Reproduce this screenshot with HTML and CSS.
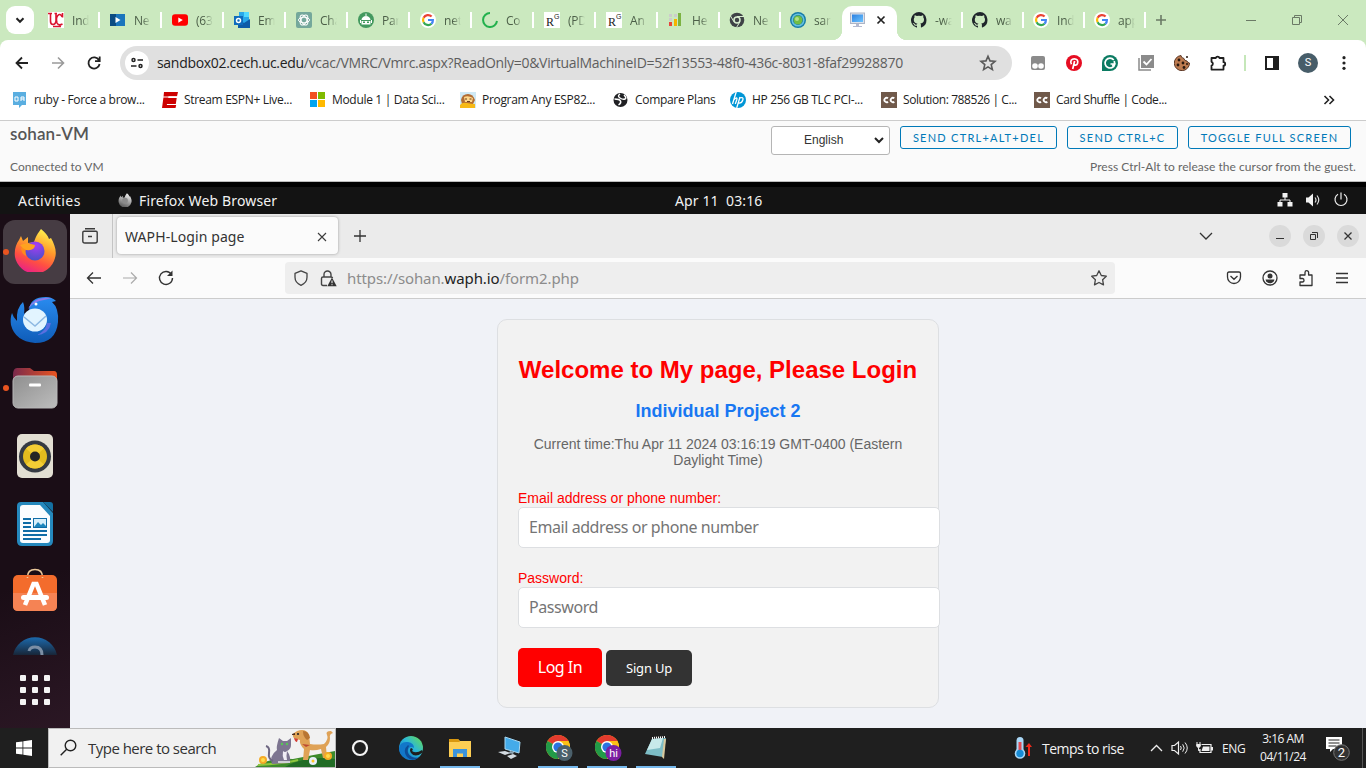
FILE: index.html
```
<!DOCTYPE html>
<html lang="en">
<head>
<meta charset="utf-8">
<title>sohan-VM</title>
<link rel="stylesheet" href="styles.css">
</head>
<body>
<svg class="defs" width="0" height="0">
  <defs>
    <linearGradient id="fire" x1=".7" y1="0" x2=".3" y2="1"><stop offset="0" stop-color="#fff44f"/><stop offset=".4" stop-color="#ff9a2b"/><stop offset=".7" stop-color="#ff4f42"/><stop offset="1" stop-color="#e81e8c"/></linearGradient>
    <linearGradient id="silver" x1=".7" y1="0" x2=".3" y2="1"><stop offset="0" stop-color="#f4f4f4"/><stop offset="1" stop-color="#555"/></linearGradient>
    <radialGradient id="violet" cx=".55" cy=".2" r=".8"><stop offset="0" stop-color="#a83cf5"/><stop offset="1" stop-color="#4a50c8"/></radialGradient>
    <linearGradient id="bird" x1="0" y1="0" x2="0" y2="1"><stop offset="0" stop-color="#2a8cf0"/><stop offset="1" stop-color="#0f5cb8"/></linearGradient>
    <linearGradient id="gray" x1="0" y1="0" x2="1" y2="1"><stop offset="0" stop-color="#8f8f8f"/><stop offset="1" stop-color="#bdbdbd"/></linearGradient>
    <linearGradient id="ubuntu" x1="0" y1="0" x2="1" y2="0"><stop offset="0" stop-color="#7a2a4c"/><stop offset="1" stop-color="#e95420"/></linearGradient>
    <linearGradient id="edge" x1="1" y1="0" x2="0" y2="1"><stop offset="0" stop-color="#6be04a"/><stop offset=".45" stop-color="#2bb8d8"/><stop offset="1" stop-color="#0a62c0"/></linearGradient>
    <linearGradient id="help" x1="0" y1="0" x2="0" y2="1"><stop offset="0" stop-color="#1c6aad"/><stop offset="1" stop-color="#182638"/></linearGradient>
    <linearGradient id="screen" x1="0" y1="0" x2="1" y2="1"><stop offset="0" stop-color="#2b7fe0"/><stop offset="1" stop-color="#6cc3ff"/></linearGradient>
  </defs>
  <symbol id="google" viewBox="0 0 16 16"><circle cx="8" cy="8" r="8" fill="#fff"/><g fill="none" stroke-width="2.2"><path d="M11.6 4.600A5 5 0 0 0 3.600 5.800" stroke="#ea4335"/><path d="M3.600 5.700a5 5 0 0 0 0 4.600" stroke="#fbbc05"/><path d="M3.600 10.200a5 5 0 0 0 7.900 1.500" stroke="#34a853"/><path d="M8 8h4.900a5 5 0 0 1-1.500 3.800" stroke="#4285f4"/></g></symbol>
  <symbol id="github" viewBox="0 0 16 16"><path fill="#20262c" d="M8 0a8 8 0 0 0-2.500 15.600c.4.1.5-.2.5-.4v-1.500c-2 .4-2.700-.5-2.900-1-.1-.2-.5-1-.9-1.200-.3-.1-.7-.5 0-.5s1.100.6 1.300.8c.7 1.200 1.900.9 2.400.7.100-.5.300-.9.500-1.100-1.800-.2-3.600-.9-3.600-4 0-.9.300-1.600.8-2.100-.1-.2-.4-1 .1-2.100 0 0 .7-.2 2.200.8a7.500 7.500 0 0 1 4 0c1.500-1 2.200-.8 2.200-.8.400 1.100.2 1.900.1 2.100.5.600.8 1.300.8 2.100 0 3.100-1.900 3.700-3.700 3.900.3.300.6.700.6 1.500v2.200c0 .2.100.5.500.4A8 8 0 0 0 8 0z"/></symbol>
  <symbol id="firefox" viewBox="0 0 44 44"><path d="M28 1c4 3 7 7 8 10l2-1c4 7 6 14 4 20a20.500 20.500 0 0 1-40-1C1 22 3 16 6 12l2-4 2 5 5-4 0 6 6-1c2-6 4-9 7-13z"/></symbol>
  <symbol id="chrome" viewBox="0 0 24 24"><circle cx="12" cy="12" r="12" fill="#fbc116"/><path d="M12 12 1.600 6A12 12 0 0 1 22.400 6z" fill="#e33b2e"/><path d="M12 12 1.600 6A12 12 0 0 0 12 24l5-9z" fill="#229a48"/><path d="M12 6h10.400A12 12 0 0 1 12 24l5-9z" fill="#fbc116"/><circle cx="12" cy="12" r="6" fill="#fff"/><circle cx="12" cy="12" r="4.600" fill="#2b73e0"/></symbol>
  <symbol id="cc" viewBox="0 0 16 16"><rect width="16" height="16" fill="#70594a"/><path d="M7 6.300a2.200 2.200 0 1 0 0 3.400M13.300 6.300a2.200 2.200 0 1 0 0 3.400" fill="none" stroke="#fff" stroke-width="1.800"/></symbol>
</svg>

<header class="chrome">
  <div class="tabstrip">
    <button class="tabsearch"><svg width="28" height="28" viewBox="0 0 28 28"><path d="M10.500 12.300 14 15.800l3.500-3.500" fill="none" stroke="#222" stroke-width="2"/></svg></button>
    <div class="tab"><svg class="fav" viewBox="0 0 16 16"><rect width="16" height="16" fill="#fff"/><g fill="none" stroke="#d9142f" stroke-width="1.600"><path d="M0 1.500h4M2.500 1.500V9q0 3.500 2.500 3.500T8 9V1.500M6.500 1.500H9M14 4.500Q12 1 9.800 3.500T9 11q1.500 3 5.500 1M5 14.500h8M14.500 1v4.500"/></g></svg><span>Ind</span></div>
    <div class="tab"><svg class="fav" viewBox="0 0 16 16"><path fill="#1a75bd" d="M0 2h15v12H0z"/><path fill="#0b4c83" d="M0 2h6v12H0z"/><path fill="#fff" d="m5.500 5 5 3-5 3z"/></svg><span>Ne</span></div>
    <div class="tab"><svg class="fav" viewBox="0 0 16 16"><rect y="2.300" width="16" height="11.500" rx="3" fill="#f00"/><path fill="#fff" d="m6.300 5.500 4.500 2.600-4.500 2.600z"/></svg><span>(63</span></div>
    <div class="tab"><svg class="fav" viewBox="0 0 16 16"><path fill="#28a8ea" d="M5 0h10v14H5z"/><path fill="#0d5ca8" d="m4 7 6 4 6-4v9H4z"/><path fill="#50d9ff" d="M10 0h5v5h-5z"/><rect y="4" width="9" height="9" fill="#0f6cbd"/><circle cx="4.500" cy="8.500" r="2" fill="none" stroke="#fff" stroke-width="1.500"/></svg><span>Em</span></div>
    <div class="tab"><svg class="fav" viewBox="0 0 16 16"><rect width="16" height="16" rx="2" fill="#74a89b"/><g fill="none" stroke="#fff"><ellipse cx="8" cy="8" rx="5.500" ry="2.800"/><ellipse cx="8" cy="8" rx="5.500" ry="2.800" transform="rotate(60 8 8)"/><ellipse cx="8" cy="8" rx="5.500" ry="2.800" transform="rotate(120 8 8)"/></g></svg><span>Cha</span></div>
    <div class="tab"><svg class="fav" viewBox="0 0 16 16"><circle cx="8" cy="8" r="8" fill="#43995f"/><path fill="#fff" d="M3.500 8a4.500 4 0 0 1 9 0zM3.500 9h9v3.500h-9zM7.500 1.500h1v3h-1zM2 8h1v3H2zM13 8h1v3h-1z"/><path fill="#43995f" d="M5 9.500h2v1.500H5zM9 9.500h2v1.500H9z"/></svg><span>Par</span></div>
    <div class="tab"><svg class="fav"><use href="#google"/></svg><span>net</span></div>
    <div class="tab"><svg class="fav" viewBox="0 0 16 16"><path d="M8 1a7 7 0 1 0 7 8" fill="none" stroke="#23b14d" stroke-width="2"/></svg><span>Co</span></div>
    <div class="tab"><svg class="fav" viewBox="0 0 16 16"><rect width="16" height="16" fill="#fff"/><text x="2" y="14" class="rg">R</text><text x="10" y="7" class="rg2">G</text></svg><span>(PD</span></div>
    <div class="tab"><svg class="fav" viewBox="0 0 16 16"><rect width="16" height="16" fill="#fff"/><text x="2" y="14" class="rg">R</text><text x="10" y="7" class="rg2">G</text></svg><span>An</span></div>
    <div class="tab narrow"><svg class="fav" viewBox="0 0 16 16"><path fill="#ccc" d="M1 2h3v3H1zM1 6h3v3H1zM6 2h3v3H6z"/><path fill="#e8453c" d="M1 10h3v4H1z"/><path fill="#f5b400" d="M6 7h3v7H6z"/><path fill="#7cb342" d="M10 1h3v13h-3z"/></svg><span>He</span></div>
    <div class="tab narrow"><svg class="fav" viewBox="0 0 16 16"><circle cx="8" cy="8" r="7.300" fill="#3e4246"/><circle cx="8" cy="8" r="3" fill="#3e4246" stroke="#d8eed0" stroke-width="1.500"/><path d="M8 4.500h7M5 9.800 1.500 4M10.800 10 7.500 15.500" stroke="#d8eed0"/></svg><span>Ne</span></div>
    <div class="tab narrow last"><svg class="fav" viewBox="0 0 16 16"><circle cx="8" cy="8" r="8" fill="#167ba9"/><circle cx="8" cy="8" r="5.800" fill="none" stroke="#67c2df" stroke-width="1.500"/><circle cx="8" cy="8" r="4.500" fill="#72bd45"/><circle cx="7" cy="7" r="2" fill="#b1e187"/></svg><span>san</span></div>
    <div class="tab narrow active"><svg class="fav" viewBox="0 0 16 16"><rect x=".5" y="1" width="14" height="10.500" fill="#dde2ec" stroke="#aeb5c6"/><rect x="2" y="2.500" width="11" height="7.500" fill="url(#screen)"/><path fill="#b5bad0" d="M6 12h3v2h3v1H3v-1h3z"/></svg><svg class="close" width="12" height="12" viewBox="0 0 12 12"><path d="m2.500 2.500 7 7m0-7-7 7" stroke="#222" stroke-width="1.700"/></svg></div>
    <div class="tab narrow"><svg class="fav"><use href="#github"/></svg><span>-wa</span></div>
    <div class="tab narrow"><svg class="fav"><use href="#github"/></svg><span>wa</span></div>
    <div class="tab narrow"><svg class="fav"><use href="#google"/></svg><span>Ind</span></div>
    <div class="tab narrow"><svg class="fav"><use href="#google"/></svg><span>app</span></div>
    <svg class="newtab" width="12" height="12" viewBox="0 0 12 12"><path d="M6 1v10M1 6h10" stroke="#6b7a66" stroke-width="1.600"/></svg>
    <div class="wincontrols">
      <svg viewBox="0 0 12 12"><path d="M1 6.500h10" stroke="#6b7a66"/></svg>
      <svg viewBox="0 0 12 12"><path d="M1.500 3.500h7v7h-7zM3.500 3V1.500h7v7H9" fill="none" stroke="#6b7a66"/></svg>
      <svg viewBox="0 0 12 12"><path d="m1 1 10 10m0-10L1 11" stroke="#6b7a66"/></svg>
    </div>
  </div>

  <div class="toolbar">
    <div class="cell"><svg width="16" height="16" viewBox="0 0 16 16"><path d="M14 8H3m5-5.500L2.500 8 8 13.500" fill="none" stroke="#222" stroke-width="1.800"/></svg></div>
    <div class="cell"><svg width="16" height="16" viewBox="0 0 16 16"><path d="M2 8h11M8 2.500 13.500 8 8 13.500" fill="none" stroke="#9a9a9a" stroke-width="1.600"/></svg></div>
    <div class="cell"><svg width="16" height="16" viewBox="0 0 16 16"><path d="M13 5.200A5.600 5.600 0 1 0 13.600 9M13.700 1.500v4.700H9" fill="none" stroke="#222" stroke-width="1.800"/></svg></div>
    <div class="omnibox">
      <span class="site"><svg width="14" height="14" viewBox="0 0 14 14"><g fill="none" stroke="#222" stroke-width="1.500"><circle cx="3.500" cy="4" r="1.500"/><circle cx="10.500" cy="10" r="1.500"/><path d="M7.500 4H13M1 10h5.500"/></g></svg></span>
      <span class="url"><b>sandbox02.cech.uc.edu</b>/vcac/VMRC/Vmrc.aspx?ReadOnly=0&amp;VirtualMachineID=52f13553-48f0-436c-8031-8faf29928870</span>
      <svg class="star" width="18" height="18" viewBox="0 0 18 18"><path d="m9 2.200 2 4.700 5 .4-3.800 3.300 1.200 5L9 12.900l-4.400 2.700 1.200-5L2 7.300l5-.4z" fill="none" stroke="#5a5a5a" stroke-width="1.600"/></svg>
    </div>
    <div class="cell"><svg width="16" height="16" viewBox="0 0 16 16"><rect x="1" y="1" width="14" height="14" rx="2" fill="#8b8b8b"/><circle cx="5" cy="11" r="2.800" fill="#fff"/><circle cx="11" cy="11" r="2.800" fill="#fff"/></svg></div>
    <div class="cell"><svg width="16" height="16" viewBox="0 0 16 16"><circle cx="8" cy="8" r="8" fill="#e60d22"/><path d="M5.500 9.300C3.500 6 5.800 3.800 8.300 3.800c2.700 0 4 2 3.300 4.400-.7 2.200-3 2.400-3.700 1M8.600 6 6.700 14" fill="none" stroke="#fff" stroke-width="1.700"/></svg></div>
    <div class="cell"><svg width="16" height="16" viewBox="0 0 16 16"><path d="M0 16V8a8 8 0 1 1 8 8z" fill="#0b7b62"/><path d="M11.800 5A4.900 4.900 0 1 0 12.800 9H8.500M12.200 6l.6 3-2.500 2" fill="none" stroke="#fff" stroke-width="1.700"/></svg></div>
    <div class="cell"><svg width="16" height="16" viewBox="0 0 16 16"><path d="M3 0h13v13H3z" fill="#8b8b8b"/><path d="M1 3v12h12" fill="none" stroke="#8b8b8b" stroke-width="1.500"/><path d="m5.500 6.500 3 3 5-5.500" fill="none" stroke="#fff" stroke-width="1.800"/></svg></div>
    <div class="cell"><svg width="16" height="16" viewBox="0 0 16 16"><path d="M7 .5A7.600 7.600 0 1 0 15.500 8q-2 0-2.500-2-3 0-3-2.500Q7 3 7 .5z" fill="#bd7b50" stroke="#5c3725"/><g fill="#291911"><circle cx="5" cy="5" r="1.400"/><circle cx="9" cy="8" r="1.400"/><circle cx="4" cy="10" r="1.400"/><circle cx="10" cy="12.500" r="1.400"/><circle cx="13" cy="9" r="1"/><circle cx="13" cy="2" r="1"/></g></svg></div>
    <div class="cell"><svg width="18" height="18" viewBox="0 0 18 18"><path d="M2.500 4h4.300a1.900 1.900 0 0 1 3.700 0h4v4.200a1.700 1.700 0 0 1 0 3.400v4h-12v-4a2 2 0 0 0 0-3.800z" fill="none" stroke="#1f1f1f" stroke-width="1.800" stroke-linejoin="round"/></svg></div>
    <div class="cell divider"><i></i></div>
    <div class="cell"><svg width="14" height="14" viewBox="0 0 14 14"><rect x="1" y="1" width="12" height="12" fill="none" stroke="#1f1f1f" stroke-width="2"/><path fill="#1f1f1f" d="M8 1h5v12H8z"/></svg></div>
    <div class="cell"><span class="avatar">S</span></div>
    <div class="cell"><svg width="4" height="16" viewBox="0 0 4 16"><g fill="#222"><circle cx="2" cy="2.700" r="1.600"/><circle cx="2" cy="8" r="1.600"/><circle cx="2" cy="13.300" r="1.600"/></g></svg></div>
  </div>

  <nav class="bookmarks">
    <a><svg class="fav" viewBox="0 0 16 16"><path d="M1 0h13v13h-4l-3 3v-3H1z" fill="#5aaee0"/><path d="M3 5h3v4H3zM9 9V5h3v4M9 7h3" fill="none" stroke="#fff"/></svg><span>ruby - Force a brow...</span></a>
    <a><svg class="fav" viewBox="0 0 16 16"><path d="M2 0h14l-1 4.300H6.500l-.3 1.700h8.500l-.9 6H5l-.2 1h9.400L13.500 16H0L1.500 5z" fill="#cd0000"/><path d="M1 5h14" stroke="#fff"/></svg><span>Stream ESPN+ Live...</span></a>
    <a><svg class="fav" viewBox="0 0 16 16"><path fill="#f25022" d="M0 0h7v7H0z"/><path fill="#7fba00" d="M8 0h7v7H8z"/><path fill="#00a4ef" d="M0 8h7v7H0z"/><path fill="#ffb900" d="M8 8h7v7H8z"/></svg><span>Module 1 | Data Sci...</span></a>
    <a><svg class="fav" viewBox="0 0 16 16"><path fill="#cfe9f5" d="M0 0h16v16H0z"/><path fill="#b26c33" d="M1 8q1-6 7-6 5 0 7 6l-2 4H2z"/><path fill="#f7b916" d="M0 13q2-3 7-2t8 1v4H0z"/><path fill="#ffd78a" d="M4 5q4-2 9 1l-1 4H5z"/><path d="M5 7h2M9.500 7h2M7 9.500h3" stroke="#6b3f1c"/></svg><span>Program Any ESP82...</span></a>
    <a><svg class="fav" viewBox="0 0 16 16"><circle cx="7.500" cy="8" r="7" fill="#202124"/><path d="M7 2Q4 4 7 6t5 1-1-4M1.500 7q5 0 6 2t-2 4" fill="none" stroke="#fff" stroke-width="1.500"/></svg><span>Compare Plans</span></a>
    <a><svg class="fav" viewBox="0 0 16 16"><circle cx="8" cy="8" r="8" fill="#0096d6"/><path d="M6.200 0 2.500 12M4.200 7.500Q7.800 4 6.700 8L5.300 12M10 5 6.700 16M9.800 6q4-1.500 3 2t-4.500 3" fill="none" stroke="#fff" stroke-width="1.300"/></svg><span>HP 256 GB TLC PCI-...</span></a>
    <a><svg class="fav"><use href="#cc"/></svg><span class="tight">Solution: 788526 | C...</span></a>
    <a><svg class="fav"><use href="#cc"/></svg><span class="tight">Card Shuffle | Code...</span></a>
    <svg class="more" width="12" height="12" viewBox="0 0 12 12"><path d="m1.500 2 4 4-4 4M6.500 2l4 4-4 4" fill="none" stroke="#222" stroke-width="1.600"/></svg>
  </nav>
</header>

<section class="vmbar">
  <div class="vminfo"><h1>sohan-VM</h1><p>Connected to VM</p></div>
  <div class="vmactions">
    <div class="vmbuttons">
      <div class="select">English<svg width="10" height="7" viewBox="0 0 10 7"><path d="m1 1 4 4 4-4" fill="none" stroke="#222" stroke-width="2"/></svg></div>
      <button class="b1">SEND CTRL+ALT+DEL</button><button class="b2">SEND CTRL+C</button><button class="b3">TOGGLE FULL SCREEN</button>
    </div>
    <p>Press Ctrl-Alt to release the cursor from the guest.</p>
  </div>
</section>

<div class="gnome">
  <span class="activities">Activities</span>
  <svg class="gfox" width="14" height="14" viewBox="0 0 44 44"><use href="#firefox" width="44" height="44" fill="url(#silver)"/><circle cx="22" cy="24" r="9" fill="#8b8b8b"/></svg>
  <span class="appname">Firefox Web Browser</span>
  <span class="clock">Apr 11&nbsp; 03:16</span>
  <div class="tray">
    <svg viewBox="0 0 16 16"><path fill="#f2f2f2" d="M5.500 1h5v4.500h-5zM.5 10h5v4.500h-5zM10.500 10h5v4.500h-5z"/><path d="M8 5v3M3 10.500V8h10v2.500" fill="none" stroke="#f2f2f2"/></svg>
    <svg viewBox="0 0 16 16"><path fill="#f2f2f2" d="M1 5.500h2.500L8 1.500v13l-4.500-4H1z"/><path d="M10 5.500q2 2.500 0 5M12 3.500q3.500 4.500 0 9" fill="none" stroke="#ddd" stroke-width="1.200"/></svg>
    <svg viewBox="0 0 16 16"><path d="M5 2.300a6 6 0 1 0 6 0M8 .5v7" fill="none" stroke="#f2f2f2" stroke-width="1.200"/></svg>
  </div>
</div>

<main class="desktop">
  <aside class="dock">
    <div class="app selected running"><svg width="44" height="46" viewBox="0 0 44 46"><use href="#firefox" width="44" height="44" fill="url(#fire)"/><path d="M8 20q6-5 14-2l-3 5q-5 0-6 5-5-3-5-8" fill="#ff8a1c"/><circle cx="22" cy="23" r="9.500" fill="url(#violet)"/><path d="M7 17q7-3 15 0 0 6-9 5-3-1-6-5" fill="#ffa21f"/></svg></div>
    <div class="app"><svg width="50" height="50" viewBox="0 0 50 50"><path d="M2 18q1 4 5 8Q6 13 13 7q2 5 1 12l5-4Q20 2 36 2q6 0 10 4l-4 1q7 6 6 20-2 21-23 21Q5 46 1 30q-1-7 1-12z" fill="url(#bird)"/><path d="M18 14Q24 1 42 3l-8 2q-10 1-16 9" fill="#8d7bea"/><ellipse cx="25" cy="25" rx="12" ry="11.500" fill="#e2f4ff"/><path d="m14 22 11 9 11-10" fill="none" stroke="#8db8e2" stroke-width="1.500"/><path d="M37 28q-1 8-10 12 12-1 14-12" fill="#5b6fe0"/><circle cx="26" cy="9" r="1.500" fill="#fff"/></svg></div>
    <div class="app running"><svg width="46" height="42" viewBox="0 0 46 42"><path d="M1 8q0-7 4-7h13l4 3h20q3 0 3 4v14H1z" fill="url(#ubuntu)"/><rect x="1" y="9" width="44" height="32" rx="5" fill="url(#gray)" stroke="#b8b8b8"/><rect x="17" y="16.500" width="12" height="3" rx="1" fill="#fff"/></svg></div>
    <div class="app"><svg width="38" height="46" viewBox="0 0 38 46"><rect x="1" y="1" width="36" height="44" rx="5" fill="#e2ded2"/><circle cx="19" cy="23.500" r="16" fill="#353a42"/><circle cx="19" cy="23.500" r="12" fill="#e3bb1e"/><path d="m19 23.500-9-8a12 12 0 0 1 18 0zM19 23.500l-9 8a12 12 0 0 0 18 0z" fill="#f3cd35"/><circle cx="19" cy="23.500" r="5" fill="#252525"/></svg></div>
    <div class="app"><svg width="38" height="46" viewBox="0 0 38 46"><path d="M5 1h22l10 11v28q0 5-5 5H6q-5 0-5-5V5q0-4 4-4" fill="#2588bd"/><path d="M7 4h17l10 11v24q0 3-3 3H7q-3 0-3-3V7q0-3 3-3" fill="#fafcff"/><path d="M27 1h7q3 0 3 3v7z" fill="#1470a2"/><g stroke="#0f6ca7" stroke-width="2"><path d="M7 18h8M7 22h8M7 26h8M7 30h24M7 34h24M7 38h18"/></g><rect x="17.500" y="17.500" width="13" height="9" fill="#d8effb" stroke="#0f6ca7"/><path fill="#1f86bd" d="m18 26 4-5 3 3 2-2 4 4z"/></svg></div>
    <div class="app store"><svg width="46" height="44" viewBox="0 0 46 44"><path d="M15.500 9q0-7.500 7.500-7.500T30.500 9" fill="none" stroke="#ecc99b" stroke-width="1.600"/><rect x="1" y="7" width="44" height="36" rx="5" fill="#f36c2c"/><path d="M1 25h44v13q0 5-5 5H6q-5 0-5-5z" fill="#f58354"/><path d="m13 37 8.500-21h3L33 37" fill="none" stroke="#fff" stroke-width="4.500"/><rect x="9" y="27" width="28" height="5" rx="2.500" fill="#fff"/><path d="M15.500 10V9M30.500 10V9" stroke="#ecc99b" stroke-width="1.600"/></svg></div>
    <div class="app clipped"><svg width="46" height="18" viewBox="0 0 46 18"><path d="M1 18a22.500 22.500 0 0 1 44 0z" fill="url(#help)"/><path d="M17 14q1-4 6-4 7 0 7 8" fill="none" stroke="#7c8fa5" stroke-width="3"/></svg></div>
    <div class="grid"><i></i><i></i><i></i><i></i><i></i><i></i><i></i><i></i><i></i></div>
  </aside>

  <div class="fxwindow">
    <div class="fxtabs">
      <div class="fxview"><svg width="16" height="16" viewBox="0 0 16 16"><path d="M3 .7h10M2 3.300h12q1.200 0 1.200 1.200V13q0 2-2 2H2.800q-2 0-2-2V4.500Q.8 3.300 2 3.300zM6 8.500h4" fill="none" stroke="#3c3c3c" stroke-width="1.400"/></svg></div>
      <div class="fxtab"><span>WAPH-Login page</span><svg width="10" height="10" viewBox="0 0 10 10"><path d="m1 1 8 8m0-8L1 9" stroke="#3c3c3c" stroke-width="1.100"/></svg></div>
      <svg class="fxplus" width="12" height="12" viewBox="0 0 12 12"><path d="M6 0v12M0 6h12" stroke="#333" stroke-width="1.300"/></svg>
      <svg class="fxdown" width="14" height="14" viewBox="0 0 14 14"><path d="m1 4 6 6 6-6" fill="none" stroke="#333" stroke-width="1.300"/></svg>
      <div class="fxwin">
        <svg viewBox="0 0 22 22"><path d="M7 13.500h8" stroke="#333"/></svg>
        <svg viewBox="0 0 22 22"><path d="M7.500 9.500h5v5h-5zM9 7.500h5.500V13" fill="none" stroke="#333"/></svg>
        <svg viewBox="0 0 22 22"><path d="m7.500 7.500 7 7m0-7-7 7" stroke="#333" stroke-width="1.300"/></svg>
      </div>
    </div>
    <div class="fxbar">
      <div class="cell"><svg width="16" height="16" viewBox="0 0 16 16"><path d="M15 8H1.500M7 2.500 1.500 8 7 13.500" fill="none" stroke="#333" stroke-width="1.300"/></svg></div>
      <div class="cell"><svg width="16" height="16" viewBox="0 0 16 16"><path d="M1 8h13.500M9 2.500 14.500 8 9 13.500" fill="none" stroke="#aaa" stroke-width="1.200"/></svg></div>
      <div class="cell"><svg width="16" height="16" viewBox="0 0 16 16"><path d="M13.500 4.500A6.500 6.500 0 1 0 14.500 8" fill="none" stroke="#333" stroke-width="1.400"/><path d="M14.500.5V6H9z" fill="#333"/></svg></div>
      <div class="fxurl">
        <svg class="shield" width="16" height="16" viewBox="0 0 16 16"><path d="m8 .8 6 2.500v4q0 5.500-6 8-6-2.500-6-8v-4z" fill="none" stroke="#444" stroke-width="1.300" stroke-linejoin="round"/></svg>
        <svg width="17" height="17" viewBox="0 0 17 17"><path d="M4 7V4.500a3.500 3.500 0 0 1 7 0V7M7 15.500H3q-1.500 0-1.500-1.500V8.500Q1.500 7 3 7h8q1.500 0 1.500 1" fill="none" stroke="#444" stroke-width="1.400"/><path fill="#333" d="m12 7.500 4.700 8.700H7.300z"/><path d="M12 10.500v2.700m0 1v1" stroke="#fff"/></svg>
        <span>https://sohan.<b>waph.io</b>/form2.php</span>
        <svg class="fxstar" width="18" height="18" viewBox="0 0 18 18"><path d="m9 1.800 2.300 4.700 5 .7-3.700 3.500.9 5.200L9 13.500l-4.500 2.400.9-5.200L1.700 7.200l5-.7z" fill="none" stroke="#444" stroke-width="1.300" stroke-linejoin="round"/></svg>
      </div>
      <div class="fxtools">
        <div class="cell"><svg width="16" height="16" viewBox="0 0 16 16"><path d="M1.500 3.500q0-1.500 1.500-1.500h10q1.500 0 1.500 1.500V7A6.500 6.500 0 0 1 1.500 7zM4.500 6 8 9.300 11.500 6" fill="none" stroke="#333" stroke-width="1.300"/></svg></div>
        <div class="cell"><svg width="16" height="16" viewBox="0 0 16 16"><circle cx="8" cy="8" r="7" fill="none" stroke="#333" stroke-width="1.300"/><circle cx="8" cy="6" r="2.500" fill="#333"/><path d="M3.500 9.500h9q-1 3.800-4.500 3.800t-4.500-3.800" fill="#333"/></svg></div>
        <div class="cell"><svg width="16" height="18" viewBox="0 0 16 18"><path d="M2 16.500V13h2.500Q6 13 6 11.300T4.500 9.500H2V6h5V3.500a1.800 1.800 0 0 1 3.600 0V6H14v10.500z" fill="none" stroke="#333" stroke-width="1.300" stroke-linejoin="round"/></svg></div>
        <div class="cell"><svg width="14" height="14" viewBox="0 0 14 14"><path d="M1 2.500h12M1 7h12M1 11.500h12" stroke="#333" stroke-width="1.300"/></svg></div>
      </div>
    </div>
    <div class="page">
      <form class="card">
        <h1>Welcome to My page, Please Login</h1>
        <h2>Individual Project 2</h2>
        <p>Current time:Thu Apr 11 2024 03:16:19 GMT-0400 (Eastern Daylight Time)</p>
        <label>Email address or phone number:</label>
        <input type="text" class="email" placeholder="Email address or phone number">
        <label>Password:</label>
        <input type="password" placeholder="Password">
        <div class="actions"><button type="button" class="login">Log In</button><button type="button" class="signup">Sign Up</button></div>
      </form>
    </div>
  </div>
</main>

<footer class="taskbar">
  <div class="start"><svg width="16" height="16" viewBox="0 0 16 16"><path fill="#fff" d="M0 2.300 6.500 1.400v6.200H0zM7.300 1.300 16 0v7.600H7.300zM0 8.400h6.500v6.200L0 13.700zM7.300 8.400H16V16l-8.700-1.200z"/></svg></div>
  <div class="search">
    <svg width="18" height="18" viewBox="0 0 18 18"><circle cx="10.500" cy="6.500" r="5.300" fill="none" stroke="#222" stroke-width="1.400"/><path d="m6.700 10.300-6 6" stroke="#222" stroke-width="1.400"/></svg>
    <span>Type here to search</span>
    <svg class="pets" width="80" height="38" viewBox="0 0 80 38">
      <path d="M0 38Q14 28 38 30q20-4 42-8v16z" fill="#3c8a2c"/><path d="M30 38q20-12 50-8v8z" fill="#216c25"/><path d="M3 36q30-2 40-5" stroke="#8fc63d" stroke-width="2" fill="none"/>
      <g fill="#7d7590"><path d="m24 9 4 3h4l4-3v7q0 4-4 6 4 5 3 12l-18 1q-3-8 5-14-1-3 2-12"/><path d="M18 32q-5-2-4-8t-3-7" fill="none" stroke="#6e6782" stroke-width="2"/></g><path d="M28 22q2 2 4 0-1 5 0 9h-3q-2-4-1-9" fill="#f1edf5"/><circle cx="27" cy="15" r="1.200" fill="#55c755"/><circle cx="32" cy="15" r="1.200" fill="#55c755"/><path d="M23 33h12" stroke="#eee" stroke-width="1.500"/>
      <path d="M38 5q4-4 9-4t7 5l1 9q7 1 14 0 5-5 3-9t4-4l2 2q-4 1-3 5 0 6-4 9l1 11h-4l-2-9q-6 2-11 1l-2 10h-5l1-11q-5-5-4-9l-4-1q-4-1-3-5" fill="#dfa256"/><path d="M48 2q6 0 7 7l-3 2q-4-3-4-9" fill="#b87532"/><path d="m37 5 3-1v2h-3z" fill="#503021"/><circle cx="43" cy="5" r="1.100" fill="#222"/><path d="m39 9 4 1-1 3q-2 0-3-4" fill="#d43e35"/><path d="m47 15 8 1-4 2z" fill="#bc4932"/>
      <g fill="#f5ab25"><circle cx="8" cy="31" r="4"/><circle cx="73" cy="27" r="4"/></g><g fill="#ffdc4b"><circle cx="8" cy="31" r="2"/><circle cx="73" cy="27" r="2"/></g><circle cx="58" cy="32" r="4" fill="#e6effa"/><circle cx="58" cy="32" r="1.500" fill="#ffc723"/>
    </svg>
  </div>
  <div class="task cortana"><svg width="18" height="18" viewBox="0 0 18 18"><circle cx="9" cy="9" r="7" fill="none" stroke="#f4f4f4" stroke-width="2.200"/></svg></div>
  <div class="task"><svg width="24" height="24" viewBox="0 0 24 24"><circle cx="12" cy="12" r="12" fill="url(#edge)"/><path d="M0 13Q1 5 9 6q6 1 6 6-3-2-5 0-3 4 2 8 5 3 9 0-7 7-15 2Q1 19 0 13" fill="#1277c9"/><path d="M9 9q-6 5-1 12 5 5 11 1-8 0-10-5-1-4 1-7" fill="#0d4d98"/><path d="M12 12q-2 2 0 5 4 5 11 0l1-1-1-2q-6 4-10 1 2-2-1-3" fill="#1f1f1f"/></svg></div>
  <div class="task open multi"><svg width="24" height="22" viewBox="0 0 24 22"><path d="M1 2h9l2 2h11v16H1z" fill="#fdce54"/><path d="M1 2h9l2 3H1z" fill="#d9980f"/><path d="M5 20v-8h14v8h-4v-3.500H9V20z" fill="#3b94dc"/></svg></div>
  <div class="task"><svg width="24" height="24" viewBox="0 0 24 24"><path d="m8 1 15 5-1 11-14-4z" fill="#44abe9" stroke="#a8d8f2"/><path d="m1 16 7-1 6 2-6 2zM10 20l6-2 4 2-6 3z" fill="#d4dce2"/><path d="m13 15 4 1-1 2-4-1z" fill="#8fa6b5"/></svg></div>
  <div class="task open"><svg class="profile" width="27" height="26" viewBox="0 0 27 26"><use href="#chrome" width="24" height="24"/><circle cx="18.500" cy="18" r="8" fill="#4b606b"/><text x="18.500" y="22" class="badge">S</text></svg></div>
  <div class="task open"><svg class="profile" width="27" height="26" viewBox="0 0 27 26"><use href="#chrome" width="24" height="24"/><circle cx="18.500" cy="18" r="8" fill="#7b1fa2"/><text x="18.500" y="22" class="badge">hi</text></svg></div>
  <div class="task open"><svg width="24" height="24" viewBox="0 0 24 24"><path d="m8 3 14-1-3 19L1 18z" fill="#7dbdc6"/><path d="m8 3 11-1-3 10-13 2z" fill="#c7e9ea"/><path d="m22 3-2 20-2-2 2-18z" fill="#d9c99d"/><path d="m8 2 13-1" stroke="#fff" stroke-width="2" stroke-dasharray="1 1"/></svg></div>
  <div class="systray">
    <svg class="weather" width="20" height="24" viewBox="0 0 20 24"><rect x="4.500" y="1" width="7" height="17" rx="3.500" fill="#a9d7f6"/><circle cx="8" cy="17.500" r="5.300" fill="#a9d7f6"/><path d="M8 6v8" stroke="#e44b52" stroke-width="3"/><circle cx="8" cy="17.500" r="3.700" fill="#178bd5"/><path d="m13.500 11 3.500-4 3 4h-2v9h-2v-9z" fill="#ef2a1c"/></svg>
    <span class="temps">Temps to rise</span>
    <svg class="up" width="13" height="8" viewBox="0 0 13 8"><path d="m1 7 5.500-5.500L12 7" fill="none" stroke="#eee" stroke-width="1.300"/></svg>
    <svg class="sound" width="18" height="16" viewBox="0 0 18 16"><path d="M1 5.500h2.500l4-3.500v12l-4-3.500H1z" fill="none" stroke="#eee" stroke-width="1.200"/><path d="M9.500 6q1.500 2 0 4M11.700 4.300q3 3.700 0 7.400M14 2.500q4.500 5.500 0 11" fill="none" stroke="#eee"/></svg>
    <svg class="battery" width="17" height="14" viewBox="0 0 17 14"><path d="M5.500 3.500H15v8H4V8" fill="none" stroke="#eee" stroke-width="1.200"/><path d="M7 5.500h6.500V10h-8zM15 6h2v3.500h-2z" fill="#eee"/><path d="M1 1v2M4 1v2M.5 3.500h4q0 3-2 3t-2-3M2.500 6.500v3h1.500" fill="#eee" stroke="#eee"/></svg>
    <span class="eng">ENG</span>
    <div class="time"><span>3:16 AM</span><span>04/11/24</span></div>
    <svg class="notify" width="26" height="28" viewBox="0 0 26 28"><path d="M1 3h16v12H8l-3 3v-3H1z" fill="#fff"/><path d="M3.500 6h11M3.500 9h11M3.500 12h8" stroke="#222"/><circle cx="16.500" cy="18.500" r="7.800" fill="#333" stroke="#777"/><text x="16.500" y="23" class="badge count">2</text></svg>
  </div>
</footer>
</body>
</html>
```
FILE: styles.css
```
* { box-sizing: border-box; margin: 0; padding: 0; }
body { width: 1366px; height: 768px; overflow: hidden; display: flex; flex-direction: column; background: #fff; font-family: "Open Sans", "Noto Sans", sans-serif; font-size: 12px; color: #222; }
button { font: inherit; border: 0; background: none; }
svg { flex: none; display: block; }
span { white-space: nowrap; }
.defs { position: absolute; }
.fav { width: 16px; height: 16px; }
.cell { width: 36px; flex: none; display: flex; align-items: center; justify-content: center; }

/* Browser chrome */
.chrome { height: 120px; flex: none; background: #cbe9bf; }
.tabstrip { height: 40px; display: flex; align-items: center; padding-left: 6px; }
.tabsearch { width: 28px; height: 28px; border-radius: 9px; background: #fff; margin-right: 14px; flex: none; }
.tab { width: 62px; flex: none; height: 36px; display: flex; align-items: center; position: relative; }
.tab.narrow { width: 61px; }
.tab span { margin-left: 8px; width: 17px; overflow: hidden; color: #4c5f48; letter-spacing: -.2px; mask-image: linear-gradient(90deg, #000 50%, transparent); }
.tab::after { content: ""; position: absolute; left: 50px; top: 10px; width: 2px; height: 16px; background: #fff; }
.tab.last { width: 60px; }
.tab.last::after { display: none; }
.tab.active { z-index: 1; }
.tab.active::before { content: ""; position: absolute; z-index: -1; left: -8px; top: 4px; width: 55px; height: 34px; background: #fff; border-radius: 10px 10px 0 0; }
.tab.active::after { z-index: -1; left: -18px; top: 28px; width: 75px; height: 10px; background: radial-gradient(circle at 0 0, transparent 10px, #fff 10.5px) left / 10px 10px no-repeat, radial-gradient(circle at 100% 0, transparent 10px, #fff 10.5px) right / 10px 10px no-repeat; }
.tab .close { margin-left: 9px; }
.newtab { margin-left: 0; }
.wincontrols { margin-left: auto; display: flex; gap: 34px; padding-right: 17px; }
.wincontrols svg { width: 12px; height: 12px; }
.rg { font: 12px "Liberation Serif", serif; fill: #222; }
.rg2 { font: 7px "Liberation Sans", sans-serif; fill: #222; }
.toolbar { height: 46px; background: #fff; border-radius: 8px 8px 0 0; display: flex; padding-left: 4px; }
.omnibox { margin: 6px 8px; width: 892px; height: 34px; border-radius: 17px; background: #e0e0e0; display: flex; align-items: center; padding: 0 15px 0 5px; }
.site { width: 24px; height: 24px; border-radius: 50%; background: #fff; display: grid; place-items: center; }
.url { margin-left: 8px; font-size: 14px; color: #5e5e5e; letter-spacing: -.3px; margin-top: -1px; }
.url b { font-weight: 400; color: #222; }
.star { margin-left: auto; }
.divider { width: 18px; }
.divider i { width: 2px; height: 16px; background: #c5e7b9; }
.avatar { width: 20px; height: 20px; border-radius: 50%; background: #475d69; color: #fff; font: 11px/20px Roboto, sans-serif; text-align: center; }
.bookmarks { height: 34px; background: #fff; display: grid; grid-template-columns: 150px 148px 150px 153px 117px 151px 153px 289px 12px; align-items: center; padding: 0 0 7px 12px; }
.bookmarks a { display: flex; align-items: center; gap: 6px; }
.bookmarks span { letter-spacing: -.32px; }
.bookmarks .tight { letter-spacing: -.42px; }

/* Remote console header */
.vmbar { height: 62px; flex: none; background: #fafafa; border-top: 1px solid #ccc; border-bottom: 1px solid #bbb; display: flex; justify-content: space-between; padding: 5px 10px 0; font-family: Lato, sans-serif; color: #565656; }
.vminfo h1 { font-size: 17px; font-weight: 600; line-height: 15px; letter-spacing: .1px; }
.vminfo p { font-size: 12px; line-height: 14px; margin-top: 19px; color: #666; }
.vmactions > p { font-size: 12px; line-height: 14px; margin-top: 5px; text-align: right; color: #666; letter-spacing: .04px; }
.vmbuttons { display: flex; gap: 10px; padding-right: 5px; align-items: flex-start; }
.vmbuttons button { height: 23px; border: 1px solid #0079b8; border-radius: 3px; color: #0079b8; font-size: 11px; line-height: 21px; letter-spacing: 1.25px; }
.b1 { width: 157px; } .b2 { width: 111px; } .b3 { width: 163px; }
.select { width: 119px; height: 29px; border: 1px solid #b5b5b5; border-radius: 3px; background: #fff; color: #333; font: 12px/27px "Liberation Sans", sans-serif; padding: 0 5px 0 32px; display: flex; align-items: center; justify-content: space-between; }

/* Guest desktop */
.gnome { height: 32px; flex: none; border-top: 5px solid #000; background: #131313; color: #f2f2f2; font: 14px "Noto Sans", sans-serif; display: flex; align-items: center; padding: 0 0 1px 18px; }
.activities { width: 100px; letter-spacing: .45px; }
.appname { width: 536px; margin-left: 7px; letter-spacing: .15px; }
.clock { letter-spacing: .1px; }
.tray { display: flex; gap: 12px; margin-left: auto; padding-right: 17px; }
.tray svg { width: 16px; height: 16px; }
.desktop { height: 514px; flex: none; display: flex; }
.dock { width: 70px; flex: none; background: linear-gradient(160deg, #1a0d16 70%, #2b1724); padding: 4px 3px 0; }
.app { width: 64px; height: 64px; margin: 2px 0 4px; display: grid; place-items: center; position: relative; border-radius: 12px; }
.app.selected { background: #463c43; padding-bottom: 2px; }
.app.running::before { content: ""; position: absolute; left: 0; top: 29px; width: 6px; height: 6px; border-radius: 50%; background: #e95420; }
.app.store { padding-bottom: 5px; }
.app.clipped { height: 18px; margin-top: 13px; margin-bottom: 0; }
.grid { display: grid; grid-template-columns: repeat(3, 6px); gap: 6px; margin: 20px 0 0 17px; }
.grid i { width: 6px; height: 6px; border-radius: 1px; background: #f4f4f4; }
.fxwindow { flex: 1; display: flex; flex-direction: column; font-family: "Noto Sans", sans-serif; }
.fxtabs { height: 44px; background: #ebebeb; display: flex; align-items: center; }
.fxview { width: 43px; height: 44px; border-right: 1px solid #c4c4c4; display: grid; place-items: center; padding-right: 2px; }
.fxtab { width: 221px; height: 37px; margin: -1px 16px 0 4px; border-radius: 4px; background: #fbfbfb; box-shadow: 0 0 3px #999; display: flex; align-items: center; justify-content: space-between; padding: 2px 11px 0 8px; font-size: 14px; letter-spacing: .1px; color: #333; }
.fxdown { margin-left: 833px; }
.fxwin { display: flex; gap: 12px; margin-left: auto; padding-right: 7px; }
.fxwin svg { width: 22px; height: 22px; border-radius: 50%; background: #dadada; }
.fxbar { height: 41px; background: #fbfbfb; border-bottom: 1px solid #ccc; display: flex; padding-left: 6px; }
.fxurl { width: 830px; height: 32px; margin: 4px 0 0 101px; background: #eee; border-radius: 4px; display: flex; align-items: center; padding: 0 7px 0 8px; color: #8c8c8c; font-size: 15px; }
.fxurl .shield { margin-right: 11px; }
.fxurl span { margin-left: 10px; letter-spacing: -.1px; }
.fxurl b { font-weight: 400; color: #222; }
.fxstar { margin-left: auto; }
.fxtools { display: flex; margin-left: auto; padding-right: 6px; }
.page { flex: 1; background: #f0f2f7; display: flex; justify-content: center; align-items: flex-start; padding-top: 20px; }
.card { width: 442px; height: 389px; background: #f2f2f2; border: 1px solid #dddfe2; border-radius: 10px; padding: 36px 20px 0; font: 14px "Liberation Sans", Arial, sans-serif; }
.card h1 { font-size: 24px; line-height: 28px; color: #f00; text-align: center; white-space: nowrap; }
.card h2 { font-size: 18px; line-height: 20px; color: #1877f2; text-align: center; margin-top: 17px; }
.card p { line-height: 16px; text-align: center; color: #666; margin: 15px 0 22px; }
.card label { display: block; line-height: 16px; color: #f00; margin-bottom: 1px; }
.card input { display: block; width: 422px; height: 41px; border: 1px solid #dddfe2; border-radius: 5px; padding: 9px 10px 11px; background: #fff; font: 16px "Noto Sans", sans-serif; letter-spacing: -.43px; margin-bottom: 22px; }
.card input::placeholder { color: #757575; }
.actions { display: flex; align-items: center; gap: 4px; margin-top: -2px; }
.login, .signup { border-radius: 5px; color: #fff; font-family: "Noto Sans", sans-serif; }
.login { width: 84px; height: 39px; background: #f00; font-size: 16px; letter-spacing: -.5px; padding-bottom: 2px; }
.signup { width: 86px; height: 36px; background: #333; font-size: 13px; letter-spacing: -.2px; margin-top: 1px; }

/* Host taskbar */
.taskbar { height: 40px; flex: none; background: #1f1f1f; display: flex; color: #f2f2f2; }
.start { width: 48px; display: grid; place-items: center; }
.search { width: 288px; background: #f1f1f1; border: 1px solid #bbb; display: flex; align-items: center; padding-left: 11px; color: #333; font-size: 15px; }
.search span { margin-left: 10px; letter-spacing: -.52px; }
.pets { margin-left: auto; }
.task { width: 40px; margin-right: 9px; display: grid; place-items: center; border-bottom: 2px solid transparent; padding-top: 2px; }
.task.cortana { width: 48px; margin-right: 7px; }
.task.open { border-color: #76b9ed; }
.profile { margin-left: 2px; }
.badge { font: 11px Roboto, sans-serif; fill: #fff; text-anchor: middle; }
.badge.count { font-size: 13px; }
.systray { margin-left: auto; width: 351px; display: flex; align-items: center; border-right: 1px solid #555; margin-right: 3px; }
.temps { margin-left: 10px; width: 108px; font-size: 14px; letter-spacing: -.5px; }
.sound { margin-left: 8px; }
.battery { margin-left: 7px; }
.eng { margin-left: 9px; width: 31px; letter-spacing: -.4px; }
.time { width: 60px; display: flex; flex-direction: column; align-items: center; line-height: 18px; letter-spacing: -.5px; }
.notify { margin-left: 12px; }
```
